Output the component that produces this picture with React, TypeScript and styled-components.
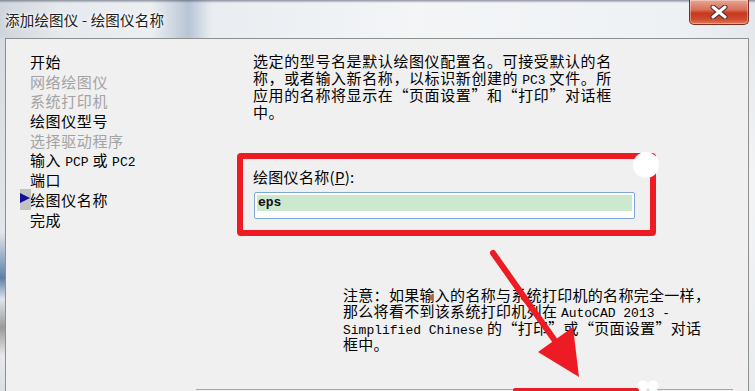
import React, { FC } from "react";
import styled, { createGlobalStyle } from "styled-components";

const GlobalStyle = createGlobalStyle`
  html, body {
    margin: 0;
    padding: 0;
    width: 755px;
    height: 391px;
    overflow: hidden;
    background: #f0f0f0;
  }
`;

const Window = styled.div`
  position: relative;
  width: 755px;
  height: 391px;
  display: flex;
  flex-direction: column;
  font-family: "Noto Sans CJK SC", "Noto Sans", sans-serif;
  overflow: hidden;
`;

const TitleBar = styled.div`
  height: 38px;
  flex: none;
  display: flex;
  align-items: flex-start;
  justify-content: space-between;
  background:
    linear-gradient(180deg, rgba(60, 66, 90, 0.55) 0, rgba(255, 255, 255, 0) 3px),
    linear-gradient(
      90deg,
      #cfd5dc 0,
      #e6e9ed 8%,
      #eceff2 20%,
      #c3cedb 24%,
      #b7c5d6 25%,
      #e9edf1 28%,
      #f3f5f7 55%,
      #eef1f4 90%,
      #e4e8ec 100%
    );
`;

const Title = styled.div`
  padding: 10px 0 0 5px;
  font-size: 14.5px;
  line-height: 19px;
  color: #202020;
  letter-spacing: 0.2px;
  text-shadow: 0 0 6px #ffffff, 0 0 3px #ffffff;
  white-space: nowrap;
`;

const CloseButton = styled.div`
  width: 60px;
  height: 25px;
  margin-right: 6px;
  box-sizing: border-box;
  border: 1px solid #7c2c22;
  border-top: none;
  border-radius: 0 0 5px 5px;
  display: flex;
  align-items: center;
  justify-content: center;
  background: linear-gradient(180deg, #e8a696 0, #d9705a 40%, #c6381f 55%, #cf4a2e 80%, #e07a55 100%);
  box-shadow: inset 0 0 0 1px rgba(255, 255, 255, 0.35);
`;

const Body = styled.div`
  flex: 1;
  display: flex;
  min-height: 0;
`;

const Frame = styled.div<{ $w: number; $side: "left" | "right" }>`
  width: ${(p) => p.$w}px;
  flex: none;
  background: ${(p) =>
    p.$side === "left"
      ? "linear-gradient(180deg, #d7dce2 0, #e2e6ea 55%, #5f7fa8 68%, #dfe4ea 74%, #9a9a9a 82%, #e6e8ea 90%, #dcdfe3 100%)"
      : "linear-gradient(180deg, #e6e9ec 0, #f2f4f6 40%, #e9ecef 100%)"};
`;

const Panel = styled.div`
  flex: 1;
  display: flex;
  flex-direction: column;
  background: #f0f0f0;
  border: 1px solid #8e8f8f;
  border-bottom: none;
  padding: 13px 0 0 24px;
  overflow: hidden;
`;

const Columns = styled.div`
  display: grid;
  grid-template-columns: 207px 1fr;
  align-items: start;
`;

const Nav = styled.div`
  display: flex;
  flex-direction: column;
`;

const NavItem = styled.div<{ $disabled?: boolean }>`
  position: relative;
  height: 19.7px;
  font-size: 15px;
  line-height: 19.7px;
  letter-spacing: 0.6px;
  white-space: nowrap;
  color: ${(p) => (p.$disabled ? "#a3a3a3" : "#000000")};
`;

const Marker = styled.span`
  position: absolute;
  left: -10px;
  top: -1px;
  width: 11px;
  height: 21px;
  background: #c3c3c3;
  &::after {
    content: "";
    position: absolute;
    left: 0;
    top: 4px;
    border-left: 10px solid #10109a;
    border-top: 5.5px solid transparent;
    border-bottom: 5.5px solid transparent;
  }
`;

const Mono = styled.span`
  font-family: "Liberation Mono", monospace;
  font-size: 13px;
  line-height: 1;
  letter-spacing: 0;
`;

const Content = styled.div`
  display: flex;
  flex-direction: column;
`;

const Paragraph = styled.div<{ $indent: number; $lh: number; $ls: number }>`
  margin-left: ${(p) => p.$indent}px;
  font-size: 15px;
  line-height: ${(p) => p.$lh}px;
  letter-spacing: ${(p) => p.$ls}px;
  color: #000000;
  white-space: nowrap;
`;

const Line = styled.div<{ $h: number }>`
  height: ${(p) => p.$h}px;
`;

const Highlight = styled.div`
  position: relative;
  width: 419px;
  box-sizing: border-box;
  margin-top: 33px;
  border: 6px solid #ed1c24;
  border-radius: 4px;
  padding: 9px 0 11px 10px;
`;

const Knob = styled.span`
  position: absolute;
  right: -9px;
  top: -7px;
  width: 26px;
  height: 26px;
  border-radius: 50%;
  background: #ffffff;
`;

const FieldLabel = styled.div`
  font-size: 15px;
  line-height: 17px;
  letter-spacing: 0.3px;
  color: #000000;
  white-space: nowrap;
`;

const Underline = styled.span`
  text-decoration: underline;
`;

const InputBox = styled.div`
  margin: 7px 0 0 1px;
  width: 381px;
  height: 27px;
  box-sizing: border-box;
  border: 1px solid #7ea8d8;
  border-radius: 2px;
  background: #ffffff;
  padding: 2px 2px 0 2px;
`;

const Selected = styled.div`
  height: 16px;
  background: #cce8cf;
  font-family: "Liberation Mono", monospace;
  font-size: 13px;
  font-weight: bold;
  line-height: 16px;
  padding-left: 1px;
  color: #111111;
`;

const Footer = styled.div`
  margin: auto 15px 1px 166px;
  border-top: 1px solid #a8a8a8;
`;

const Overlay = styled.svg`
  position: absolute;
  left: 0;
  top: 0;
  pointer-events: none;
`;

const navItems: { label: React.ReactNode; disabled?: boolean; current?: boolean }[] = [
  { label: "开始" },
  { label: "网络绘图仪", disabled: true },
  { label: "系统打印机", disabled: true },
  { label: "绘图仪型号" },
  { label: "选择驱动程序", disabled: true },
  {
    label: (
      <>
        输入 <Mono>PCP</Mono> 或 <Mono>PC2</Mono>
      </>
    ),
  },
  { label: "端口" },
  { label: "绘图仪名称", current: true },
  { label: "完成" },
];

const intro: React.ReactNode[] = [
  "选定的型号名是默认绘图仪配置名。可接受默认的名",
  <>
    称，或者输入新名称，以标识新创建的 <Mono>PC3</Mono> 文件。所
  </>,
  "应用的名称将显示在“页面设置”和“打印”对话框",
  "中。",
];

const note: React.ReactNode[] = [
  "注意：如果输入的名称与系统打印机的名称完全一样，",
  <>
    那么将看不到该系统打印机列在 <Mono>AutoCAD 2013 -</Mono>
  </>,
  <>
    <Mono>Simplified Chinese</Mono> 的“打印”或“页面设置”对话
  </>,
  "框中。",
];

const App: FC = () => {
  return (
    <>
      <GlobalStyle />
      <Window>
        <TitleBar>
          <Title>添加绘图仪 - 绘图仪名称</Title>
          <CloseButton>
            <svg width="20" height="14" viewBox="0 0 20 14">
              <path d="M4 2 L16 12 M16 2 L4 12" stroke="#4a2a26" strokeWidth="5" strokeLinecap="round" />
              <path d="M4 2 L16 12 M16 2 L4 12" stroke="#ffffff" strokeWidth="3" strokeLinecap="round" />
            </svg>
          </CloseButton>
        </TitleBar>
        <Body>
          <Frame $w={5} $side="left" />
          <Panel>
            <Columns>
              <Nav>
                {navItems.map((item, i) => (
                  <NavItem key={i} $disabled={item.disabled}>
                    {item.current && <Marker />}
                    {item.label}
                  </NavItem>
                ))}
              </Nav>
              <Content>
                <Paragraph $indent={16} $lh={17} $ls={0.6}>
                  {intro.map((l, i) => (
                    <Line key={i} $h={17}>
                      {l}
                    </Line>
                  ))}
                </Paragraph>
                <Highlight>
                  <Knob />
                  <FieldLabel>
                    绘图仪名称(<Underline>P</Underline>):
                  </FieldLabel>
                  <InputBox>
                    <Selected>eps</Selected>
                  </InputBox>
                </Highlight>
                <Paragraph $indent={106} $lh={16.3} $ls={0.3} style={{ marginTop: 51 }}>
                  {note.map((l, i) => (
                    <Line key={i} $h={16.3}>
                      {l}
                    </Line>
                  ))}
                </Paragraph>
              </Content>
            </Columns>
            <Footer />
          </Panel>
          <Frame $w={6} $side="right" />
        </Body>
        <Overlay width="755" height="391" viewBox="0 0 755 391">
          <line x1="493" y1="253" x2="558" y2="345" stroke="#ed1c24" strokeWidth="6" strokeLinecap="round" />
          <polygon points="579,377 538,352 573,327" fill="#ed1c24" />
          <rect x="513" y="388" width="126" height="6" rx="2" fill="#ed1c24" />
          <circle cx="643" cy="386" r="5.5" fill="#ffffff" />
          <circle cx="653" cy="386" r="5.5" fill="#ffffff" />
        </Overlay>
      </Window>
    </>
  );
};

export default App;
